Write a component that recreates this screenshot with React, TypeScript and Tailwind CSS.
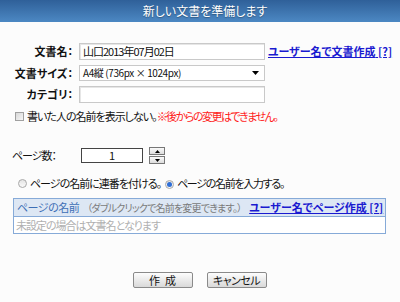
import React from "react";

const jp = "font-['Noto_Sans_CJK_JP',sans-serif] [font-feature-settings:'palt']";

function HelpLink({ children }: { children: React.ReactNode }) {
  return (
    <a href="#" className="font-bold text-[#1a1ad0] underline whitespace-nowrap">
      {children} <span className="text-[#1a1ad0]">[?]</span>
    </a>
  );
}

function Radio({ checked }: { checked?: boolean }) {
  return (
    <span className="inline-flex h-[9px] w-[9px] shrink-0 items-center justify-center rounded-full border border-[#a8a8a8] bg-gradient-to-b from-[#e4e4e4] to-[#fafafa]">
      {checked && <span className="h-[5px] w-[5px] rounded-full bg-[#2f6fd6]" />}
    </span>
  );
}

export default function App() {
  return (
    <div className={`h-[302px] w-[400px] overflow-hidden bg-[#fcfcfc] text-[11px] leading-none text-[#111] ${jp}`}>
      {/* title bar */}
      <div className="flex h-[22px] items-center justify-center bg-gradient-to-b from-[#2f6099] to-[#4c88c3] pl-[10px]">
        <h1 className="text-[12px] text-white [text-shadow:0_1px_1px_rgba(0,0,0,0.3)]">新しい文書を準備します</h1>
      </div>

      {/* 文書名 */}
      <div className="mt-[21px] flex items-center">
        <label className="w-[73px] text-right font-bold">文書名：</label>
        <div className="ml-[6px] flex h-[17px] w-[186px] items-center border border-[#c9c9c9] bg-white pl-[3px] tracking-[-1px] shadow-[inset_1px_1px_0_#e6e6e6]">
          山口2013年07月02日
        </div>
        <span className="ml-[3px]">
          <HelpLink>ユーザー名で文書作成</HelpLink>
        </span>
      </div>

      {/* 文書サイズ */}
      <div className="mt-[5px] flex items-center">
        <label className="w-[73px] text-right font-bold">文書サイズ：</label>
        <div className="ml-[6px] flex h-[16px] w-[186px] items-center justify-between border border-[#c9c9c9] bg-white pl-[3px] pr-[5px]">
          <span className="text-[10px] tracking-[-0.4px]">A4縦 (736px × 1024px)</span>
          <svg width="7" height="4" viewBox="0 0 7 4">
            <path d="M0 0h7L3.5 4z" fill="#000" />
          </svg>
        </div>
      </div>

      {/* カテゴリ */}
      <div className="mt-[5px] flex items-center">
        <label className="w-[73px] text-right font-bold">カテゴリ：</label>
        <div className="ml-[6px] h-[17px] w-[186px] border border-[#c9c9c9] bg-white shadow-[inset_1px_1px_0_#e6e6e6]" />
      </div>

      {/* checkbox */}
      <div className="mt-[8px] flex items-center whitespace-nowrap pl-[15px] tracking-[-1px]">
        <span className="h-[9px] w-[9px] border border-[#a0a0a0] bg-gradient-to-br from-[#d8d8d8] to-[#f6f6f6]" />
        <span className="ml-[3px]">書いた人の名前を表示しない。</span>
        <span className="tracking-[-1.5px] text-[#ff1a1a]">※後からの変更はできません。</span>
      </div>

      {/* ページ数 */}
      <div className="mt-[25px] flex items-center pl-[12px]">
        <label className="w-[69px] tracking-[-1px]">ページ数：</label>
        <div className="flex h-[15px] w-[62px] items-center justify-center border border-[#444] bg-white">1</div>
        <div className="ml-[6px] flex w-[16px] flex-col gap-[1px]">
          <span className="flex h-[8px] items-center justify-center border border-[#777] bg-gradient-to-b from-[#fafafa] to-[#dcdcdc]">
            <svg width="5" height="3" viewBox="0 0 5 3"><path d="M2.5 0L5 3H0z" fill="#000" /></svg>
          </span>
          <span className="flex h-[8px] items-center justify-center border border-[#777] bg-gradient-to-b from-[#fafafa] to-[#dcdcdc]">
            <svg width="5" height="3" viewBox="0 0 5 3"><path d="M0 0h5L2.5 3z" fill="#000" /></svg>
          </span>
        </div>
      </div>

      {/* radios */}
      <div className="mt-[13px] flex items-center whitespace-nowrap pl-[18px] tracking-[-1px]">
        <Radio />
        <span className="ml-[3px]">ページの名前に連番を付ける。</span>
        <span className="ml-[4px]">
          <Radio checked />
        </span>
        <span className="ml-[3px] tracking-[-1.3px]">ページの名前を入力する。</span>
      </div>

      {/* page name table */}
      <div className="mx-[13px] mt-[9px] w-[373px] border border-[#86aad8]">
        <div className="flex h-[18px] items-center whitespace-nowrap border-b border-[#86aad8] bg-[#dde7f4] pl-[3px]">
          <span className="tracking-[-0.5px] text-[#3d6fb6]">ページの名前</span>
          <span className="ml-[8px] text-[10px] tracking-[-0.8px] text-[#7a7a7a]">（ダブルクリックで名前を変更できます。）</span>
          <span className="ml-[8px]">
            <HelpLink>ユーザー名でページ作成</HelpLink>
          </span>
        </div>
        <div className="flex h-[16px] items-center bg-white pl-[2px] tracking-[-1px] text-[#b0b0b0]">未設定の場合は文書名となります</div>
      </div>

      {/* buttons */}
      <div className="mt-[38px] flex justify-center gap-[14px] pr-[1px]">
        <button className="h-[16px] w-[60px] rounded-[2px] border border-[#8a8a8a] bg-gradient-to-b from-[#fdfdfd] to-[#d9d9d9] text-[11px] leading-none">
          作&nbsp;&nbsp;成
        </button>
        <button className="h-[16px] w-[60px] rounded-[2px] border border-[#8a8a8a] bg-gradient-to-b from-[#fdfdfd] to-[#d9d9d9] text-[11px] leading-none tracking-[-0.5px]">
          キャンセル
        </button>
      </div>
    </div>
  );
}
